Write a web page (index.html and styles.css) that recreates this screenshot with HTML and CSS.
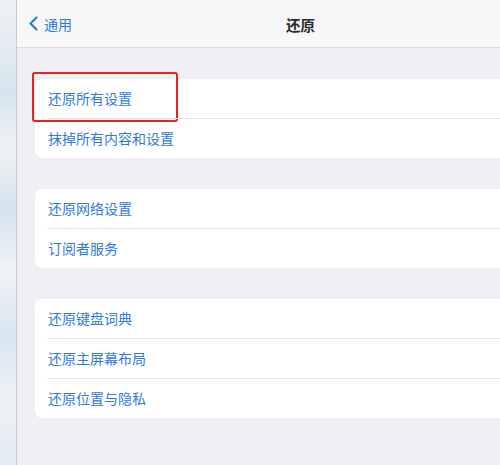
FILE: index.html
```html
<!DOCTYPE html>
<html lang="zh-CN">
<head>
    <meta charset="UTF-8">
    <meta name="viewport" content="width=device-width, initial-scale=1.0">
    <title>还原</title>
    <link rel="stylesheet" href="styles.css">
</head>
<body>
    <div class="screen">
        <div class="sidebar"></div>
        <div class="detail">
            <div class="navbar">
                <div class="back">
                    <svg class="chevron" width="11" height="15" viewBox="0 0 11 15">
                        <path d="M8.5 1.5 L2.5 7.5 L8.5 13.5" fill="none" stroke="#2f7bd6" stroke-width="2.2" stroke-linecap="round" stroke-linejoin="round"/>
                    </svg>
                    <span>通用</span>
                </div>
                <div class="title">还原</div>
            </div>
            <div class="content">
                <div class="group">
                    <div class="row highlight">还原所有设置</div>
                    <div class="row">抹掉所有内容和设置</div>
                </div>
                <div class="group">
                    <div class="row">还原网络设置</div>
                    <div class="row">订阅者服务</div>
                </div>
                <div class="group">
                    <div class="row">还原键盘词典</div>
                    <div class="row">还原主屏幕布局</div>
                    <div class="row">还原位置与隐私</div>
                </div>
            </div>
        </div>
    </div>
</body>
</html>
```

FILE: styles.css
```css
body {
    margin: 0;
    font-family: "Noto Sans CJK SC", "Noto Sans", sans-serif;
    background-color: #efeff4;
}
.screen {
    display: flex;
    height: 465px;
    overflow: hidden;
}
.sidebar {
    width: 16px;
    flex-shrink: 0;
    background: linear-gradient(180deg, #eef2f5 0%, #d7e5ee 20%, #eef2f5 32%, #d5e4ed 45%, #eef3f6 58%, #d8e6ef 72%, #eef2f5 86%, #e2ebf1 100%);
    border-right: 1px solid #c9cbd0;
}
.detail {
    flex: 1;
    min-width: 0;
}
.navbar {
    height: 47px;
    background-color: #f7f7f9;
    border-bottom: 1px solid #dcdce0;
    display: flex;
    align-items: center;
    position: relative;
}
.back {
    display: flex;
    align-items: center;
    gap: 5px;
    padding-left: 11px;
    color: #2f7bd6;
    font-size: 14px;
}
.title {
    position: absolute;
    left: 269px;
    top: 0;
    line-height: 50px;
    font-size: 14.5px;
    font-weight: bold;
    color: #2a2a2e;
}
.content {
    padding: 31px 0 0 18px;
}
.group {
    background-color: #fff;
    border-radius: 7px 0 0 7px;
    margin-bottom: 31px;
    margin-right: -20px;
}
.row {
    height: 39px;
    line-height: 39px;
    padding-left: 13px;
    font-size: 14px;
    color: #2f7bd6;
    position: relative;
}
.row + .row {
    border-top: 1px solid #e6e6ea;
    margin-left: 12px;
    padding-left: 1px;
}
.highlight::after {
    content: "";
    position: absolute;
    left: -3px;
    top: -7px;
    width: 142px;
    height: 46px;
    border: 2px solid #f21f1f;
    border-radius: 3px;
}
```
